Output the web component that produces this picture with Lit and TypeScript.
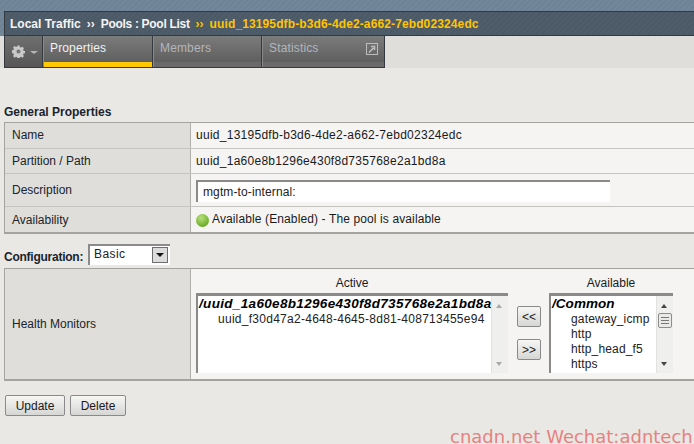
import { LitElement, html, css, svg } from "lit";
import { customElement } from "lit/decorators.js";

const gear = svg`<svg width="13" height="13" viewBox="0 0 14 14"><path fill="#c9c9c9" d="M5.8 0.5h2.4l.3 1.8 1.2.5 1.5-1 1.7 1.7-1 1.5.5 1.2 1.8.3v2.4l-1.8.3-.5 1.2 1 1.5-1.7 1.7-1.5-1-1.2.5-.3 1.8H5.800l-.3-1.800-1.200-.5-1.500 1-1.700-1.700 1-1.500-.5-1.200-1.800-.3V5.800l1.800-.3.5-1.200-1-1.500 1.700-1.700 1.500 1 1.200-.5z"/><circle cx="7" cy="7" r="2.2" fill="#777"/></svg>`;

const ext = svg`<svg width="12" height="12" viewBox="0 0 12 12"><rect x=".5" y=".5" width="11" height="11" fill="none" stroke="#bdbdbd"/><path d="M3 9.500 7.500 5M5 3.500h3.500V7" fill="none" stroke="#bdbdbd" stroke-width="1.600"/></svg>`;

@customElement("app-root")
export class AppRoot extends LitElement {
  static styles = css`
    :host {
      display: block;
      position: relative;
      width: 694px;
      height: 444px;
      overflow: hidden;
      background: #e9e8e4;
      font: 12px "Liberation Sans", Arial, sans-serif;
      color: #1a1a1a;
    }
    .banner {
      height: 36px;
      box-sizing: border-box;
      padding: 11px 0 0 4px;
      background: repeating-linear-gradient(135deg, #73879a 0 2px, #6f8396 2px 4px);
    }
    .crumbs {
      height: 25px;
      box-sizing: border-box;
      border-top: 1px solid #34393f;
      border-left: 1px solid #34393f;
      border-bottom: 1px solid #34393f;
      background: repeating-linear-gradient(135deg, #4f5c6a 0 2px, #4c5966 2px 4px);
      display: flex;
      align-items: center;
      padding-left: 5px;
      font-weight: bold;
      color: #f4f4f4;
      white-space: nowrap;
    }
    .sep { margin: 0 6px; font-size: 12px; width: 8px; }
    .uuid { color: #ffc400; }
    .id { letter-spacing: 0.12px; }
    .pool { color: #f4f4f4; letter-spacing: -0.3px; }
    .tabbar {
      height: 32px;
      padding-left: 4px;
      background: #dfdeda;
      display: flex;
    }
    .tabs {
      display: flex;
      height: 32px;
      box-sizing: border-box;
      border-left: 1px solid #34393f;
      border-right: 1px solid #34393f;
      border-bottom: 1px solid #34393f;
      background: #34393f;
      gap: 1px;
    }
    .tab {
      box-sizing: border-box;
      height: 31px;
      background: linear-gradient(#7b7b7b, #5a5a5a);
      border-left: 1px solid #8a8a8a;
      display: flex;
      flex-direction: column;
      color: #b3b6bb;
      position: relative;
    }
    .tab .lbl { flex: 1; padding: 5px 0 0 6px; letter-spacing: 0.15px; }
    .tab .strip { height: 5px; background: #6a6a6a; }
    .tab.on { color: #f2f2f2; }
    .tab.on .strip { background: #ffc800; }
    .gear {
      width: 37px;
      height: 31px;
      box-sizing: border-box;
      background: linear-gradient(#6f6f6f, #565656);
      display: flex;
      align-items: center;
      padding: 0 0 0 7px;
      gap: 5px;
    }
    .caret {
      width: 0;
      height: 0;
      border-left: 4px solid transparent;
      border-right: 4px solid transparent;
      border-top: 3px solid #b5b5b5;
      margin-top: 2px;
    }
    .t1 { width: 109px; }
    .t2 { width: 108px; }
    .t3 { width: 122px; }
    .ext { position: absolute; right: 6px; top: 7px; height: 12px; }
    .section {
      font-weight: bold;
      color: #1a2430;
      padding: 37px 0 0 4px;
      height: 17px;
      line-height: 14px;
    }
    .table {
      margin: 0 0 0 4px;
      border-top: 1px solid #a3a3a0;
      border-left: 1px solid #a3a3a0;
      border-bottom: 2px solid #a3a3a0;
      background: #f5f4f2;
    }
    .row {
      display: flex;
      border-bottom: 1px solid #c4c4c0;
    }
    .row:last-child { border-bottom: 0; }
    .k {
      flex: none;
      background: #dfdeda;
      border-right: 1px solid #b0b0ac;
      box-sizing: content-box;
      padding-left: 7px;
      margin-right: 5px;
      display: flex;
      align-items: center;
      width: 178px;
      color: #20242a;
    }
    .v { display: flex; align-items: center; flex: 1; min-width: 0; white-space: nowrap; letter-spacing: 0.27px; }
    .h25 { height: 25px; }
    .h24 { height: 24px; }
    .h32 { height: 32px; }
    .up { padding-bottom: 1px; }
    .lift { margin-top: -2px; }
    .input {
      width: 414px;
      height: 22px;
      box-sizing: border-box;
      background: #fff;
      border-top: 2px solid #8a8a8a;
      border-left: 2px solid #8a8a8a;
      padding: 3px 0 0 5px;
      margin-top: 1px;
      color: #222;
      letter-spacing: 0.12px;
    }
    .avail { letter-spacing: 0.12px; }
    .dot {
      width: 13px;
      height: 13px;
      border-radius: 50%;
      margin: 2px 3px 0 0;
      background: radial-gradient(circle at 40% 30%, #b6e07a, #6fae2c 70%, #4f8a1f);
      border: 0;
    }
    .config {
      display: flex;
      align-items: flex-start;
      height: 34px;
      padding: 10px 0 0 4px;
      font-weight: bold;
      color: #1a2430;
      box-sizing: border-box;
    }
    .configlbl { padding-top: 6px; width: 84px; letter-spacing: -0.25px; }
    .select {
      width: 82px;
      height: 21px;
      box-sizing: border-box;
      background: #fff;
      border-top: 2px solid #8a8a8a;
      border-left: 2px solid #8a8a8a;
      font-weight: normal;
      display: flex;
      justify-content: space-between;
      padding: 0 2px 0 4px;
      line-height: 17px;
      color: #222;
      letter-spacing: 0.4px;
    }
    .arrow {
      width: 16px;
      height: 16px;
      box-sizing: border-box;
      margin-top: 1px;
      border: 1px solid #6e6e6e;
      background: #dcdcdc;
      display: flex;
      align-items: center;
      justify-content: center;
    }
    .arrow i {
      border-left: 4px solid transparent;
      border-right: 4px solid transparent;
      border-top: 4px solid #111;
    }
    .k.tall { height: 110px; }
    .kt { margin-top: -1px; }
    .hm { display: flex; height: 110px; flex: 1; align-items: flex-start; }
    .col { display: flex; flex-direction: column; align-items: center; }
    .coltitle { height: 24px; line-height: 28px; }
    .lb {
      display: flex;
      height: 80px;
      box-sizing: border-box;
      border-top: 3px solid #8a8a8a;
      border-left: 2px solid #8a8a8a;
      background: #fff;
      overflow: hidden;
    }
    .wa { width: 312px; }
    .wb { width: 124px; }
    .items { flex: 1; min-width: 0; overflow: hidden; padding-left: 1px; white-space: nowrap; color: #222; }
    .items div { height: 15px; line-height: 16px; padding-left: 19px; }
    .wa .items div { letter-spacing: 0.27px; }
    .wb .items div { letter-spacing: 0.15px; }
    .items .g {
      font-weight: bold;
      font-style: italic;
      font-size: 13.5px;
      padding-left: 0;
      color: #000;
    }
    .wa .items .g { letter-spacing: 0.33px; }
    .wb .items .g { letter-spacing: 0.05px; }
    .sb {
      width: 17px;
      flex: none;
      background: #efefed;
      border-left: 1px solid #e2e2e0;
      position: relative;
      box-sizing: border-box;
    }
    .sb .u, .sb .d {
      position: absolute;
      left: 4px;
      border-left: 3.5px solid transparent;
      border-right: 3.5px solid transparent;
    }
    .sb .u { top: 8px; border-bottom: 4px solid #a8a8a8; }
    .sb .d { bottom: 7px; border-top: 4px solid #a8a8a8; }
    .sb.dark .u { border-bottom-color: #444; }
    .sb.dark .d { border-top-color: #444; }
    .thumb {
      position: absolute;
      left: 1px;
      top: 17px;
      width: 14px;
      height: 15px;
      box-sizing: border-box;
      border: 1px solid #8d8d8d;
      border-radius: 2px;
      background: repeating-linear-gradient(#e9e9e7 0 1px, #777 1px 2px, #e9e9e7 2px 3px);
      background-size: 8px 9px;
      background-position: center;
      background-repeat: no-repeat;
      background-color: #e9e9e7;
    }
    .move { width: 24px; margin: 0 8px 0 9px; padding-top: 37px; display: flex; flex-direction: column; gap: 12px; }
    .btn {
      box-sizing: border-box;
      border: 1px solid #8a8a8a;
      border-radius: 2px;
      background: linear-gradient(#f6f6f5, #d6d6d4);
      color: #1a1a1a;
      display: flex;
      align-items: center;
      justify-content: center;
    }
    .mv { width: 24px; height: 21px; font-size: 12px; }
    .actions { display: flex; gap: 5px; padding: 14px 0 0 5px; }
    .a1 { width: 60px; height: 21px; }
    .a2 { width: 56px; height: 21px; }
    .mark {
      position: absolute;
      left: 450px;
      top: 429px;
      font: 18px/15px "DejaVu Sans", sans-serif;
      color: #e8817f;
      white-space: nowrap;
    }
  `;

  render() {
    return html`
      <div class="banner">
        <div class="crumbs">
          <span>Local Traffic</span><span class="sep">››</span>
          <span class="pool">Pools : Pool List</span><span class="sep uuid">››</span>
          <span class="uuid id">uuid_13195dfb-b3d6-4de2-a662-7ebd02324edc</span>
        </div>
      </div>
      <div class="tabbar">
        <div class="tabs">
          <div class="gear">${gear}<span class="caret"></span></div>
          <div class="tab on t1"><span class="lbl">Properties</span><span class="strip"></span></div>
          <div class="tab t2"><span class="lbl">Members</span><span class="strip"></span></div>
          <div class="tab t3"><span class="lbl">Statistics</span><span class="ext">${ext}</span><span class="strip"></span></div>
        </div>
      </div>
      <div class="section">General Properties</div>
      <div class="table">
        <div class="row h25"><div class="k up">Name</div><div class="v up">uuid_13195dfb-b3d6-4de2-a662-7ebd02324edc</div></div>
        <div class="row h24"><div class="k">Partition / Path</div><div class="v">uuid_1a60e8b1296e430f8d735768e2a1bd8a</div></div>
        <div class="row h32"><div class="k">Description</div><div class="v"><div class="input">mgtm-to-internal:</div></div></div>
        <div class="row h25"><div class="k">Availability</div><div class="v avail"><span class="dot"></span><span class="lift">Available (Enabled) - The pool is available</span></div></div>
      </div>
      <div class="config">
        <span class="configlbl">Configuration:</span>
        <div class="select">Basic<span class="arrow"><i></i></span></div>
      </div>
      <div class="table">
        <div class="row">
          <div class="k tall"><span class="kt">Health Monitors</span></div>
          <div class="hm">
            <div class="col">
              <div class="coltitle">Active</div>
              <div class="lb wa">
                <div class="items">
                  <div class="g">/uuid_1a60e8b1296e430f8d735768e2a1bd8a</div>
                  <div>uuid_f30d47a2-4648-4645-8d81-408713455e94</div>
                </div>
                <div class="sb"><span class="u"></span><span class="d"></span></div>
              </div>
            </div>
            <div class="move">
              <div class="btn mv">&lt;&lt;</div>
              <div class="btn mv">&gt;&gt;</div>
            </div>
            <div class="col">
              <div class="coltitle">Available</div>
              <div class="lb wb">
                <div class="items">
                  <div class="g">/Common</div>
                  <div>gateway_icmp</div>
                  <div>http</div>
                  <div>http_head_f5</div>
                  <div>https</div>
                </div>
                <div class="sb dark"><span class="u"></span><span class="thumb"></span><span class="d"></span></div>
              </div>
            </div>
          </div>
        </div>
      </div>
      <div class="actions">
        <div class="btn a1">Update</div>
        <div class="btn a2">Delete</div>
      </div>
      <div class="mark">cnadn.net Wechat:adntech</div>
    `;
  }
}
